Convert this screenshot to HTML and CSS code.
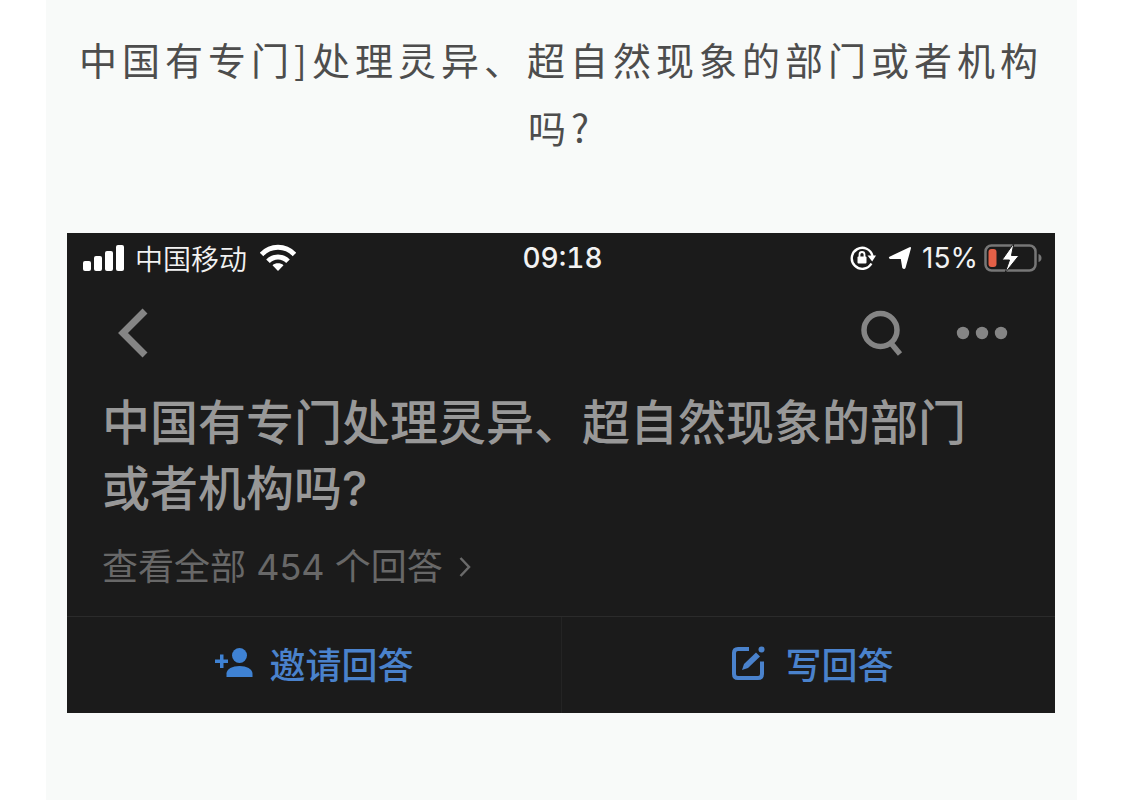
FILE: index.html
```html
<!DOCTYPE html>
<html lang="zh-CN">
<head>
<meta charset="utf-8">
<meta name="viewport" content="width=device-width, initial-scale=1">
<title>中国有专门处理灵异、超自然现象的部门或者机构吗?</title>
<link rel="stylesheet" href="styles.css">
</head>
<body>
<main class="page">
  <h1 class="headline">中国有专门]处理灵异、超自然现象的部门或者机构吗?</h1>
  <section class="phone">
    <div class="status">
      <div class="status-left">
        <svg width="42" height="28" viewBox="0 0 42 28" fill="#fff" aria-hidden="true"><rect x="0" y="17" width="8" height="10" rx="2"/><rect x="11" y="12" width="8" height="15" rx="2"/><rect x="22" y="7" width="8" height="20" rx="2"/><rect x="33" y="1" width="8" height="26" rx="2"/></svg>
        <span class="carrier">中国移动</span>
        <svg class="wifi" width="36" height="28" viewBox="0 0 36 28" aria-hidden="true"><g fill="none" stroke="#fff" stroke-width="5"><path d="M1.500 10.500C10.500 .7 25.500 .7 34.500 10.500"/><path d="M8 17.200C13.500 11.500 22.500 11.500 28 17.200"/></g><path d="M18 27l-5.500-5.700c3-2.600 8-2.600 11 0z" fill="#fff"/></svg>
      </div>
      <time class="clock">09:18</time>
      <div class="status-right">
        <svg width="26" height="26" viewBox="0 0 26 26" fill="none" stroke="#fff" aria-hidden="true"><path d="M21.400 18.500A10.500 10.500 0 1 1 22.500 11" stroke-width="2.400"/><path d="M17.500 10.500H26l-3.800 6z" fill="#fff" stroke="none"/><rect x="7.500" y="11.500" width="9" height="7" rx="1" fill="#fff" stroke="none"/><path d="M9.500 12V9.500a2.500 2.500 0 0 1 5 0V12" stroke-width="1.800"/></svg>
        <svg class="locate" width="24" height="24" viewBox="0 0 24 24" aria-hidden="true"><path d="M1.500 10.700L21.500 1.200q1.900-.6 1.400 1.400L17.500 22q-1.200 2.200-3.200 0L12.800 13 2 12.900q-2-.7-.5-2.200z" fill="#fff"/></svg>
        <span class="charge">15%</span>
        <svg width="58" height="30" viewBox="0 0 58 30" aria-hidden="true"><rect x="1.500" y="2.500" width="50" height="25" rx="6" fill="none" stroke="#777" stroke-width="2.500"/><path d="M54.500 11q3 1 3 4t-3 4z" fill="#777"/><rect x="4.500" y="6" width="8" height="18" rx="3" fill="#e46047"/><path d="M30 0L18 17h7.500L21 30 35 12.500h-7.500z" fill="#fff" stroke="#1b1b1b" stroke-width="1"/></svg>
      </div>
    </div>
    <nav class="toolbar">
      <button class="icon-button" aria-label="返回"><svg width="32" height="50" viewBox="0 0 32 50" fill="none" stroke="#858585" stroke-width="7"><path d="M28 3L6 25l22 22"/></svg></button>
      <div class="tools">
        <button class="icon-button" aria-label="搜索"><svg width="42" height="46" viewBox="0 0 42 46" fill="none" stroke="#858585" stroke-width="5.500"><circle cx="19.500" cy="20" r="16.500"/><path d="M29 32l10 12"/></svg></button>
        <button class="icon-button" aria-label="更多"><svg width="52" height="14" viewBox="0 0 52 14" fill="#858585"><circle cx="7" cy="7" r="6.200"/><circle cx="26" cy="7" r="6.200"/><circle cx="45" cy="7" r="6.200"/></svg></button>
      </div>
    </nav>
    <div class="question">
      <h2 class="title">中国有专门处理灵异、超自然现象的部门或者机构吗?</h2>
      <a class="answers" href="#">查看全部 454 个回答 <svg width="12" height="22" viewBox="0 0 12 22" fill="none" stroke="#6a6a6a" stroke-width="2.500" aria-hidden="true"><path d="M1.500 2l8.500 9-8.500 9"/></svg></a>
    </div>
    <div class="actions">
      <button class="action"><svg width="40" height="32" viewBox="0 0 40 32" fill="#3f82d3" aria-hidden="true"><circle cx="25.500" cy="8.500" r="7.500"/><path d="M12.500 30v-3.500c0-4.500 6-7.500 13-7.500s13 3 13 7.500V30z"/><path d="M6 7.500h3.500v5H14V16H9.500v5H6v-5H1v-3.500h5z"/></svg>邀请回答</button>
      <button class="action action-write"><svg width="34" height="36" viewBox="0 0 34 36" fill="none" stroke="#4a82cc" stroke-width="4" aria-hidden="true"><path d="M18 4H7Q3 4 3 8v21q0 4 4 4h20q4 0 4-4V16.500"/><path d="M11 25l2-6L25 7.500l4 4L17 23z" fill="#4a82cc" stroke="none"/><circle cx="30.500" cy="4.500" r="3" fill="#4a82cc" stroke="none"/></svg>写回答</button>
    </div>
  </section>
</main>
</body>
</html>
```
FILE: styles.css
```css
* { box-sizing: border-box; }
body {
  margin: 0;
  background: #fff;
  font-family: "Noto Sans CJK SC", sans-serif;
}
button {
  border: 0;
  padding: 0;
  background: none;
  font: inherit;
}
svg { display: block; flex: none; }
.page {
  min-height: 100vh;
  margin: 0 45px 0 46px;
  padding: 25px 22px 80px 21px;
  background: #f8faf9;
}
.headline {
  margin: 0 0 72px;
  color: #4d4d4d;
  font-size: 38px;
  font-weight: 400;
  line-height: 68px;
  letter-spacing: 5px;
  text-align: center;
}
.phone { background: #1b1b1b; }
.status {
  display: grid;
  grid-template-columns: 1fr auto 1fr;
  align-items: center;
  height: 50px;
  padding: 0 13px 0 16px;
  color: #f2f2f2;
}
.status-left, .status-right {
  display: flex;
  align-items: center;
}
.status-left { gap: 10px; }
.status-right { justify-content: flex-end; gap: 6px; }
.wifi { margin-left: 3px; }
.locate { margin: 0 4px 0 6px; }
.carrier { font-size: 28px; line-height: 40px; font-weight: 350; }
.clock {
  font-family: Inter, sans-serif;
  font-size: 28px;
  font-weight: 500;
  font-variant-numeric: tabular-nums;
}
.charge {
  font-family: Inter, sans-serif;
  font-size: 28px;
}
.toolbar {
  display: flex;
  align-items: center;
  justify-content: space-between;
  height: 99px;
  padding: 0 47px 0 50px;
}
.tools { display: flex; align-items: center; gap: 53px; }
.question { padding: 8px 64px 25px 35px; }
.title {
  margin: 0;
  color: #989898;
  font-family: Inter, "Noto Sans CJK SC", sans-serif;
  font-size: 48px;
  font-weight: 500;
  line-height: 66px;
}
.answers {
  display: flex;
  align-items: center;
  gap: 16px;
  margin-top: 21px;
  color: #686868;
  font-family: Inter, "Noto Sans CJK SC", sans-serif;
  font-size: 36px;
  line-height: 48px;
  text-decoration: none;
}
.actions {
  display: grid;
  grid-template-columns: 1fr 1fr;
  border-top: 1px solid #2b2b2b;
}
.action {
  display: flex;
  align-items: center;
  justify-content: center;
  gap: 15px;
  height: 96px;
  padding-bottom: 4px;
  color: #4a82cc;
  font-size: 36px;
  font-weight: 500;
}
.action-write {
  gap: 20px;
  padding-left: 8px;
  border-left: 1px solid #242424;
}
```
